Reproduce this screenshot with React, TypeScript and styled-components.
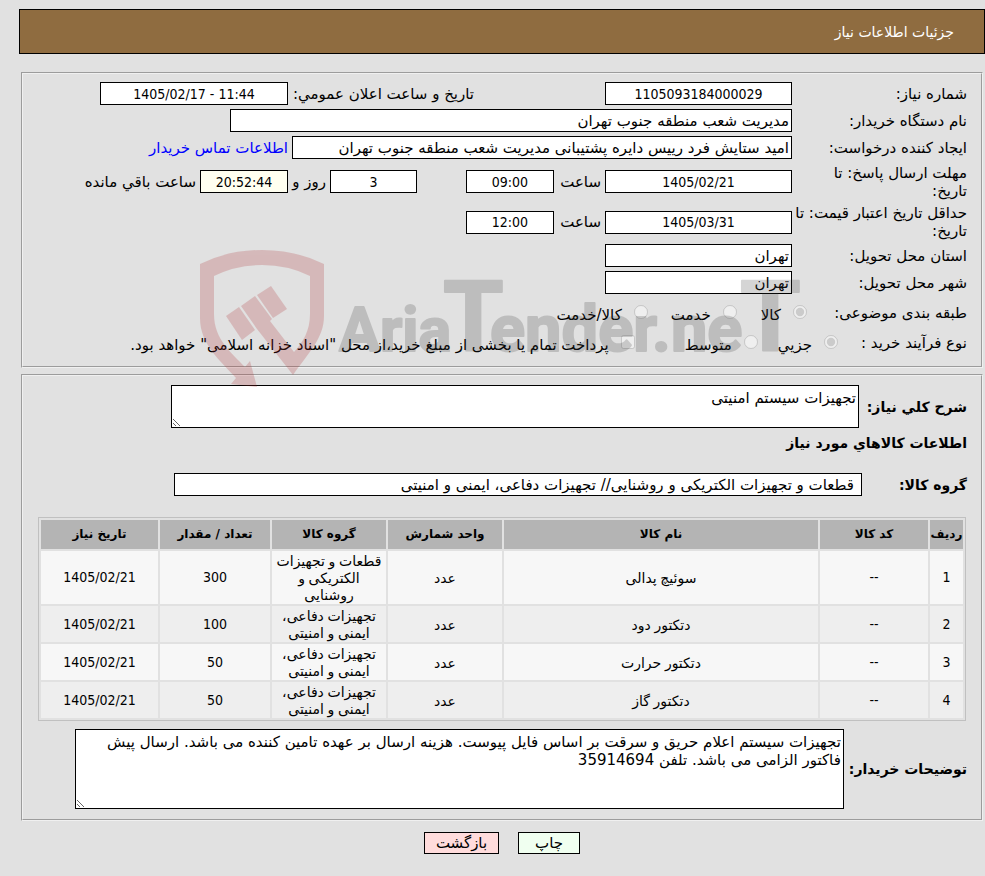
import React from "react";
import styled, { createGlobalStyle } from "styled-components";

const textFont = '"DejaVu Sans", sans-serif';
const cellFont = '"Noto Sans", "DejaVu Sans", sans-serif';
const numberFont = '"DejaVu Sans Condensed", "DejaVu Sans", sans-serif';

const GlobalStyle = createGlobalStyle`
  * { box-sizing: border-box; }
  body {
    margin: 0;
    background: #e1e1e1;
    color: #000;
    font-family: ${textFont};
    font-size: 15px;
    line-height: 18px;
  }
`;

const Page = styled.main`
  position: relative;
  padding: 9px 0 20px 19px;
`;

const TitleBar = styled.header`
  display: flex;
  align-items: center;
  height: 45px;
  margin-bottom: 18px;
  padding: 0 30px;
  border: 1px solid #000;
  background: #8f6c40;
`;

const Title = styled.h1`
  margin: 0;
  color: #fff;
  font-size: 14px;
  font-weight: 400;
`;

const Panel = styled.section<{ $top: number }>`
  margin: 0 2px 6px;
  padding: ${(p) => p.$top}px 14px 10px;
  border: 2px groove #f0f0f0;
`;

const Row = styled.div<{ $height?: number; $label?: number }>`
  display: grid;
  grid-template-columns: ${(p) => p.$label ?? 175}px 1fr;
  align-items: center;
  min-height: ${(p) => p.$height ?? 27}px;
`;

const Label = styled.label`
  white-space: nowrap;
`;

const GroupLabel = styled.span`
  white-space: nowrap;
`;

const Fields = styled.div`
  display: flex;
  align-items: center;
`;

const Input = styled.input<{ $width: number; $tint?: string }>`
  width: ${(p) => p.$width}px;
  height: 23px;
  padding: 0 2px;
  border: 1px solid #000;
  border-radius: 0;
  background: ${(p) => p.$tint ?? "#fff"};
  color: #000;
  font-family: ${textFont};
  font-size: 15px;
`;

const NumberInput = styled(Input)`
  font-family: ${numberFont};
  font-size: 14px;
  text-align: center;
`;

const Unit = styled.label<{ $width: number }>`
  width: ${(p) => p.$width}px;
  padding-right: 4px;
  white-space: nowrap;
`;

const PublishLabel = styled.label`
  width: 317px;
  padding-left: 5px;
  text-align: left;
`;

const ContactLink = styled.a`
  margin-right: 4px;
  color: #0000ff;
  text-decoration: none;
`;

const Choice = styled.label<{ $gap: number }>`
  display: flex;
  align-items: center;
  gap: 12px;
  margin-left: ${(p) => p.$gap}px;
  padding-top: 3px;
  white-space: nowrap;

  input {
    width: 14px;
    height: 14px;
    margin: 0 0 5px;
  }
`;

const WideRow = styled.div`
  display: flex;
  align-items: center;
`;

const BoldLabel = styled.label<{ $width?: number }>`
  flex: none;
  width: ${(p) => (p.$width ? `${p.$width}px` : "auto")};
  margin-left: 5px;
  font-size: 14px;
  font-weight: 700;
`;

const SectionTitle = styled.h2`
  margin: 6px 0 20px;
  font-size: 14px;
  font-weight: 700;
  line-height: 19px;
`;

const TextArea = styled.textarea<{ $width: number; $height: number }>`
  display: block;
  width: ${(p) => p.$width}px;
  height: ${(p) => p.$height}px;
  padding: 3px 2px;
  border: 1px solid #000;
  border-radius: 0;
  background: #fff;
  color: #000;
  font-family: ${textFont};
  font-size: 15px;
  line-height: 18px;
`;

const GroupInput = styled(Input)`
  padding-right: 7px;
`;

const ItemTable = styled.table`
  width: calc(100% - 2px);
  margin: 21px 1px 8px;
  border: 1px solid #c0c0c0;
  border-collapse: separate;
  border-spacing: 2px;
  table-layout: fixed;
  font-family: ${cellFont};
  font-size: 14px;
  line-height: 17px;
  text-align: center;
`;

const HeadCell = styled.th<{ $width?: number }>`
  width: ${(p) => (p.$width ? `${p.$width}px` : "auto")};
  height: 29px;
  padding: 0;
  background: #b4b4b4;
  font-family: ${textFont};
  font-size: 12px;
  white-space: nowrap;
`;

const ItemRow = styled.tr`
  background: #f7f7f7;

  &:nth-child(even) {
    background: #eeeeee;
  }
`;

const Cell = styled.td`
  padding: 1px 4px;
`;

const NumberCell = styled(Cell)`
  padding: 1px 0;
  font-family: ${numberFont};
`;

const Actions = styled.div`
  display: flex;
  justify-content: center;
  gap: 19px;
  margin: 11px 0 0;
`;

const ActionButton = styled.button<{ $tint: string; $width: number }>`
  width: ${(p) => p.$width}px;
  height: 22px;
  padding: 0;
  border: 1px solid #000;
  border-radius: 0;
  background: ${(p) => p.$tint};
  color: #000;
  font-family: ${textFont};
  font-size: 15px;
  line-height: 18px;
`;

/* Translucent brand mark laid over the form. */
const Watermark = styled.svg`
  position: absolute;
  top: 245px;
  right: 180px;
  width: 610px;
  height: 145px;
  pointer-events: none;
`;

const BrandMark = () => (
  <Watermark viewBox="195 245 610 145" direction="ltr" role="img" aria-label="AriaTender.neT">
    <g fill="#af2d30" opacity="0.22">
      <path d="M200 264Q228 250 262 250Q296 250 324 264V316C324 338 309 352 293 375L257 329L241 306L255 296L272 319L270 321L294 352C303 342 310 331 310 314V276Q288 265 262 265Q236 265 214 276V314C214 340 232 353 245 367L250 361L257 387L231 384L236 378C221 361 200 345 200 318Z" />
      <path d="M226 316L239 307L255 330L242 340Z" />
      <path d="M257 295L271 286L287 309L273 318Z" />
    </g>
    <g
      fill="#323232"
      stroke="#323232"
      strokeWidth="2"
      strokeLinejoin="round"
      opacity="0.2"
      fontFamily="Roboto, sans-serif"
      fontWeight="700"
    >
      <text x="339" y="351">
        <tspan fontSize="61">Aria</tspan>
        <tspan x="443" fontSize="98">T</tspan>
        <tspan x="490" fontSize="65">ender.ne</tspan>
        <tspan x="740" fontSize="98">T</tspan>
      </text>
    </g>
  </Watermark>
);

const items = [
  { name: "سوئیچ پدالی", group: "قطعات و تجهیزات الکتریکی و روشنایی", count: 300 },
  { name: "دتکتور دود", group: "تجهیزات دفاعی، ایمنی و امنیتی", count: 100 },
  { name: "دتکتور حرارت", group: "تجهیزات دفاعی، ایمنی و امنیتی", count: 50 },
  { name: "دتکتور گاز", group: "تجهیزات دفاعی، ایمنی و امنیتی", count: 50 },
];

export default function App() {
  return (
    <Page dir="rtl" lang="fa">
      <GlobalStyle />
      <TitleBar>
        <Title>جزئیات اطلاعات نیاز</Title>
      </TitleBar>

      <Panel $top={6}>
        <Row>
          <Label htmlFor="number">شماره نیاز:</Label>
          <Fields>
            <NumberInput id="number" $width={187} dir="ltr" readOnly value="1105093184000029" />
            <PublishLabel htmlFor="published">تاریخ و ساعت اعلان عمومي:</PublishLabel>
            <NumberInput id="published" $width={188} dir="ltr" readOnly value="1405/02/17 - 11:44" />
          </Fields>
        </Row>
        <Row>
          <Label htmlFor="buyer">نام دستگاه خریدار:</Label>
          <Fields>
            <Input id="buyer" $width={562} readOnly value="مدیریت شعب منطقه جنوب تهران" />
          </Fields>
        </Row>
        <Row>
          <Label htmlFor="creator">ایجاد کننده درخواست:</Label>
          <Fields>
            <Input
              id="creator"
              $width={500}
              readOnly
              value="امید ستایش فرد رییس دایره پشتیبانی مدیریت شعب منطقه جنوب تهران"
            />
            <ContactLink href="#contact">اطلاعات تماس خریدار</ContactLink>
          </Fields>
        </Row>
        <Row $height={41}>
          <Label htmlFor="deadline">
            مهلت ارسال پاسخ: تا
            <br />
            تاریخ:
          </Label>
          <Fields>
            <NumberInput id="deadline" $width={187} dir="ltr" readOnly value="1405/02/21" />
            <Unit htmlFor="deadline-time" $width={51}>ساعت</Unit>
            <NumberInput id="deadline-time" $width={88} dir="ltr" readOnly value="09:00" />
            <Unit as="span" $width={49} />
            <NumberInput id="days" $width={87} dir="ltr" readOnly value="3" />
            <Unit htmlFor="days" $width={42}>روز و</Unit>
            <NumberInput id="left" $width={88} $tint="#fffff0" dir="ltr" readOnly value="20:52:44" />
            <Unit htmlFor="left" $width={120}>ساعت باقي مانده</Unit>
          </Fields>
        </Row>
        <Row $height={40}>
          <Label htmlFor="validity">
            حداقل تاریخ اعتبار قیمت: تا
            <br />
            تاریخ:
          </Label>
          <Fields>
            <NumberInput id="validity" $width={187} dir="ltr" readOnly value="1405/03/31" />
            <Unit htmlFor="validity-time" $width={51}>ساعت</Unit>
            <NumberInput id="validity-time" $width={88} dir="ltr" readOnly value="12:00" />
          </Fields>
        </Row>
        <Row>
          <Label htmlFor="province">استان محل تحویل:</Label>
          <Fields>
            <Input id="province" $width={187} readOnly value="تهران" />
          </Fields>
        </Row>
        <Row>
          <Label htmlFor="city">شهر محل تحویل:</Label>
          <Fields>
            <Input id="city" $width={187} readOnly value="تهران" />
          </Fields>
        </Row>
        <Row $height={34} $label={160}>
          <GroupLabel>طبقه بندی موضوعی:</GroupLabel>
          <Fields>
            <Choice $gap={24}><input type="radio" name="kind" disabled defaultChecked />کالا</Choice>
            <Choice $gap={23}><input type="radio" name="kind" disabled />خدمت</Choice>
            <Choice $gap={0}><input type="radio" name="kind" disabled />کالا/خدمت</Choice>
          </Fields>
        </Row>
        <Row $height={26} $label={129}>
          <GroupLabel>نوع فرآیند خرید :</GroupLabel>
          <Fields>
            <Choice $gap={20}><input type="radio" name="process" disabled defaultChecked />جزیي</Choice>
            <Choice $gap={50}><input type="radio" name="process" disabled />متوسط</Choice>
            <Choice $gap={0}>
              <input type="checkbox" disabled />
              پرداخت تمام یا بخشی از مبلغ خرید،از محل "اسناد خزانه اسلامی" خواهد بود.
            </Choice>
          </Fields>
        </Row>
      </Panel>

      <Panel $top={9}>
        <WideRow>
          <BoldLabel htmlFor="summary" $width={103}>شرح کلي نیاز:</BoldLabel>
          <TextArea id="summary" $width={688} $height={43} readOnly value="تجهیزات سیستم امنیتی" />
        </WideRow>
        <SectionTitle>اطلاعات کالاهاي مورد نیاز</SectionTitle>
        <WideRow>
          <BoldLabel htmlFor="group" $width={100}>گروه کالا:</BoldLabel>
          <GroupInput
            id="group"
            $width={688}
            readOnly
            value="قطعات و تجهیزات الکتریکی و روشنایی// تجهیزات دفاعی، ایمنی و امنیتی"
          />
        </WideRow>
        <ItemTable>
          <thead>
            <tr>
              <HeadCell $width={33}>ردیف</HeadCell>
              <HeadCell $width={108}>کد کالا</HeadCell>
              <HeadCell>نام کالا</HeadCell>
              <HeadCell $width={114}>واحد شمارش</HeadCell>
              <HeadCell $width={114}>گروه کالا</HeadCell>
              <HeadCell $width={110}>تعداد / مقدار</HeadCell>
              <HeadCell $width={117}>تاریخ نیاز</HeadCell>
            </tr>
          </thead>
          <tbody>
            {items.map((item, index) => (
              <ItemRow key={item.name}>
                <NumberCell>{index + 1}</NumberCell>
                <NumberCell>--</NumberCell>
                <Cell>{item.name}</Cell>
                <Cell>عدد</Cell>
                <Cell>{item.group}</Cell>
                <NumberCell>{item.count}</NumberCell>
                <NumberCell dir="ltr">1405/02/21</NumberCell>
              </ItemRow>
            ))}
          </tbody>
        </ItemTable>
        <WideRow>
          <BoldLabel htmlFor="notes">توضیحات خریدار:</BoldLabel>
          <TextArea
            id="notes"
            $width={769}
            $height={80}
            readOnly
            value="تجهیزات سیستم اعلام حریق و سرقت بر اساس فایل پیوست. هزینه ارسال بر عهده تامین کننده می باشد. ارسال پیش فاکتور الزامی می باشد. تلفن 35914694"
          />
        </WideRow>
      </Panel>

      <Actions>
        <ActionButton type="button" $tint="#f0fff0" $width={62}>چاپ</ActionButton>
        <ActionButton type="button" $tint="#ffdcdc" $width={75}>بازگشت</ActionButton>
      </Actions>
      <BrandMark />
    </Page>
  );
}
